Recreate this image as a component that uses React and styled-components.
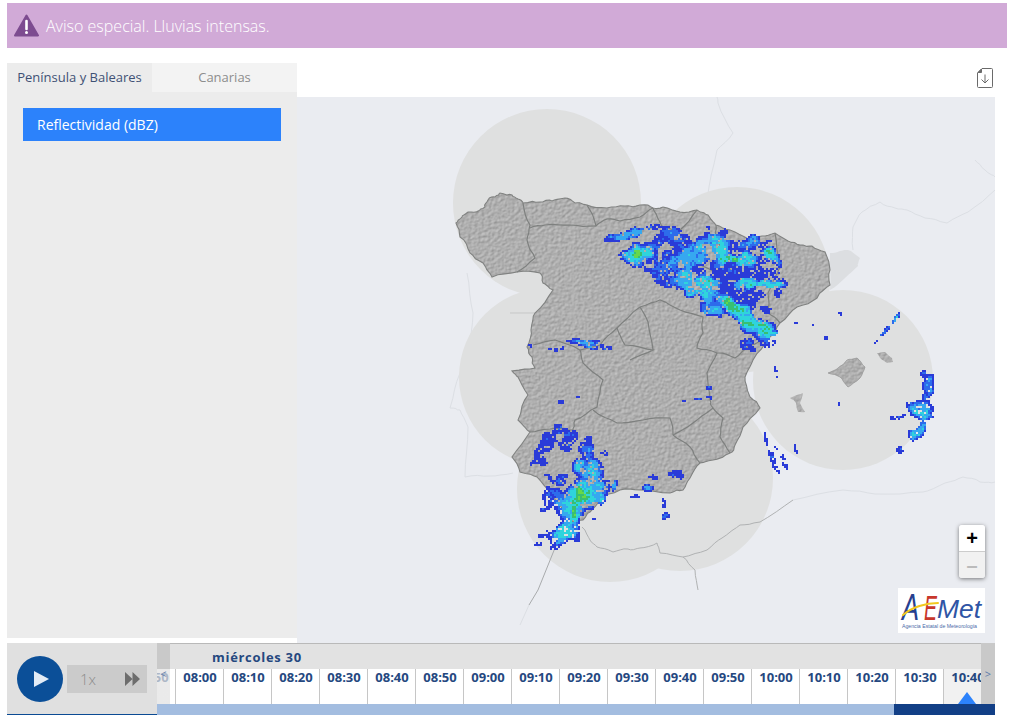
import React from "react";
import styled, { createGlobalStyle } from "styled-components";

const Global = createGlobalStyle`
  html, body { margin: 0; padding: 0; background: #fff; }
  body { font-family: "Open Sans", "Liberation Sans", sans-serif; }
  * { box-sizing: border-box; }
`;

const Page = styled.div`
  width: 1019px;
  height: 715px;
  overflow: hidden;
  padding: 3px 12px 0 7px;
  display: flex;
  flex-direction: column;
`;
const Banner = styled.div`
  height: 45px;
  flex: none;
  background: #d1aad7;
  display: flex;
  align-items: center;
  gap: 7px;
  padding-left: 7px;
  margin-bottom: 15px;
  color: #fff;
  font-size: 16px;
  font-weight: 300;
`;
const Main = styled.div`
  display: flex;
  height: 580px;
  flex: none;
`;
const Side = styled.div`
  width: 290px;
  height: 575px;
  display: flex;
  flex-direction: column;
`;
const Tabs = styled.div`
  display: flex;
  height: 29px;
  flex: none;
`;
const Tab = styled.div`
  flex: 1;
  display: flex;
  align-items: center;
  justify-content: center;
  padding-bottom: 2px;
  font-size: 13px;
  background: ${(p) => (p.$active ? "#ececec" : "#f3f3f3")};
  color: ${(p) => (p.$active ? "#3f5175" : "#8d8d8d")};
`;
const Panel = styled.div`
  flex: 1;
  background: #ececec;
  padding: 16px;
`;
const LayerButton = styled.div`
  width: 258px;
  height: 33px;
  background: #2c82fb;
  color: #fff;
  font-size: 14px;
  display: flex;
  align-items: center;
  padding-left: 14px;
`;
const MapColumn = styled.div`
  width: 698px;
  display: flex;
  flex-direction: column;
`;
const Toolbar = styled.div`
  height: 34px;
  flex: none;
  display: flex;
  justify-content: flex-end;
  align-items: flex-start;
  padding: 5px 2px 0 0;
`;
const MapFrame = styled.div`
  position: relative;
  flex: 1;
  background: #eaecf1;
  overflow: hidden;
`;
const MapSvg = styled.svg`
  display: block;
  width: 100%;
  height: 100%;
`;
const ZoomBox = styled.div`
  position: absolute;
  right: 10px;
  top: 428px;
  width: 26px;
  height: 53px;
  border-radius: 3px;
  box-shadow: 0 1px 4px rgba(0, 0, 0, 0.5);
  overflow: hidden;
  display: flex;
  flex-direction: column;
`;
const ZoomButton = styled.div`
  flex: 1;
  display: flex;
  align-items: center;
  justify-content: center;
  font-family: "Liberation Sans", sans-serif;
  font-weight: 700;
  font-size: 20px;
  background: ${(p) => (p.$off ? "#f1f1f1" : "#fff")};
  color: ${(p) => (p.$off ? "#bbb" : "#000")};
  border-top: ${(p) => (p.$off ? "1px solid #ccc" : "none")};
`;
const Logo = styled.div`
  position: absolute;
  right: 10px;
  top: 491px;
  width: 87px;
  height: 45px;
  background: #fff;
`;
const LogoSvg = styled.svg`
  display: block;
`;
const Bottom = styled.div`
  display: flex;
  height: 72px;
  flex: none;
  width: 988px;
`;
const Controls = styled.div`
  width: 150px;
  flex: none;
  background: #e0e0e0;
  border-bottom: 1px solid #0b4a93;
  display: flex;
  align-items: center;
  gap: 4px;
  padding-left: 10px;
`;
const PlayButton = styled.div`
  width: 46px;
  height: 46px;
  border-radius: 50%;
  background: #0b4f98;
  display: flex;
  align-items: center;
  justify-content: center;
  padding-left: 3px;
`;
const Speed = styled.div`
  width: 80px;
  height: 28px;
  background: #cbcbcb;
  display: flex;
  align-items: center;
  justify-content: space-between;
  padding: 0 7px 0 13px;
  color: #8c8c8c;
  font-size: 15px;
  font-weight: 300;
`;
const Timeline = styled.div`
  position: relative;
  flex: 1;
  min-width: 0;
  display: flex;
  flex-direction: column;
  overflow: hidden;
`;
const DayHeader = styled.div`
  height: 26px;
  flex: none;
  background: #e2e2e2;
  border-top: 1px solid #b9b9b9;
  padding: 4px 0 0 55px;
  color: #25487f;
  font-weight: 700;
  font-size: 13px;
  letter-spacing: 0.7px;
  line-height: 18px;
`;
const Slots = styled.div`
  display: flex;
  height: 35px;
  flex: none;
  margin-left: -29.5px;
  background: #fff;
`;
const Slot = styled.div`
  width: 48px;
  flex: none;
  text-align: center;
  position: relative;
  padding-left: 2px;
  font-size: 13px;
  font-weight: 700;
  line-height: 16px;
  color: #25487f;
  background: ${(p) => (p.$active ? "#f1f1f1" : "#fff")};
  border-right: 1px solid #c6c6c6;
`;
const Marker = styled.div`
  position: absolute;
  left: 50%;
  bottom: 0;
  transform: translateX(-50%);
  width: 0;
  height: 0;
  border-left: 9px solid transparent;
  border-right: 9px solid transparent;
  border-bottom: 12px solid #2c82fb;
`;
const Progress = styled.div`
  display: flex;
  flex: 1;
`;
const ProgressPart = styled.div`
  flex: ${(p) => p.$size};
  background: ${(p) => p.$color};
`;
const ScrollButton = styled.div`
  position: absolute;
  top: 0;
  bottom: 11px;
  ${(p) => (p.$right ? "right: 0; width: 14px;" : "left: 0; width: 13px;")}
  background: ${(p) => (p.$right ? "#c9c9c9" : "linear-gradient(#c9c9c9 26px, rgba(226, 226, 226, 0.72) 26px)")};
  color: #5c7cab;
  font-size: 11px;
  line-height: 12px;
  padding-top: 25px;
  text-align: center;
`;

/* ---------- map data (page coordinates) ---------- */
const hash = (x, y) => {
  const s = Math.sin(x * 127.1 + y * 311.7) * 43758.5453;
  return s - Math.floor(s);
};
const noise = (x, y, c) => {
  const fx = x / c, fy = y / c;
  const ix = Math.floor(fx), iy = Math.floor(fy);
  const tx = fx - ix, ty = fy - iy;
  const a = hash(ix, iy), b = hash(ix + 1, iy), d = hash(ix, iy + 1), e = hash(ix + 1, iy + 1);
  return (a * (1 - tx) + b * tx) * (1 - ty) + (d * (1 - tx) + e * tx) * ty;
};
const rough = (pts, amp, closed) => {
  let cur = pts;
  for (let it = 0; it < 2; it++) {
    const out = [];
    const n = closed ? cur.length : cur.length - 1;
    for (let i = 0; i < n; i++) {
      const a = cur[i], b = cur[(i + 1) % cur.length];
      out.push(a);
      const k = amp / (it + 1);
      out.push([
        (a[0] + b[0]) / 2 + (hash(a[0], b[1] + it) - 0.5) * k,
        (a[1] + b[1]) / 2 + (hash(b[0], a[1] + it) - 0.5) * k,
      ]);
    }
    if (!closed) out.push(cur[cur.length - 1]);
    cur = out;
  }
  return cur;
};
const toPath = (pts, closed) =>
  "M" + pts.map((p) => p[0].toFixed(1) + " " + p[1].toFixed(1)).join("L") + (closed ? "Z" : "");

const spain = [
  [456,223],[462,217],[468,212],[478,211],[485,207],[488,200],[495,197],[500,193],[512,195],[518,199],[523,203],[540,202],[552,201],[565,198],
  [575,203],[587,205],[607,208],[625,206],[640,205],[653,208],[663,207],[680,212],[697,210],[708,215],[716,225],[730,230],[750,240],[762,236],[775,233],
  [788,241],[800,245],[812,246],[825,252],[830,270],[830,285],[817,298],[797,307],[780,323],[767,340],[753,360],[745,377],[750,397],[760,408],
  [743,427],[735,445],[730,453],[713,460],[700,463],[690,478],[683,490],[670,493],[640,490],[620,490],[600,500],[590,512],[583,520],[573,522],[563,510],
  [550,493],[537,477],[520,472],[512,457],[530,432],[518,420],[528,395],[518,377],[512,371],[535,368],[532,357],[527,347],[531,330],[535,313],[553,290],
  [543,283],[540,273],[517,272],[492,277],[483,263],[470,253],[460,237],
];
const mallorca = [[828,373],[838,368],[847,360],[857,358],[865,367],[860,378],[848,387],[840,377]];
const menorca = [[877,353],[885,352],[892,358],[893,362],[887,363],[880,358]];
const ibiza = [[790,398],[803,393],[800,403],[805,412],[798,412],[796,403]];
const catalonia = [[830,253],[840,251],[848,250],[860,258],[858,266],[845,278],[830,290]];

const borders = [
  [[523,203],[530,225],[527,240],[535,258],[517,272]],
  [[530,228],[545,225],[570,225],[596,226],[607,219],[620,221],[640,217],[653,208]],
  [[587,205],[596,226]],
  [[653,208],[660,222],[665,228],[680,230],[697,210]],
  [[665,228],[672,245],[690,262],[715,272],[735,280],[728,262],[716,238],[716,225]],
  [[775,233],[780,267],[768,293],[768,313],[780,323]],
  [[533,345],[555,340],[580,350],[600,345],[617,328],[640,307],[660,300],[680,310],[703,317],[703,333],[697,348],[717,353],[735,358],[750,345],[767,340]],
  [[580,350],[583,363],[603,380],[597,407],[575,420],[573,430],[550,429],[530,432]],
  [[617,328],[625,345],[653,350],[630,360]],
  [[640,307],[648,322],[653,350]],
  [[593,410],[617,423],[643,420],[670,418],[673,435],[690,447],[700,463]],
  [[673,435],[693,423],[713,408],[723,418],[720,437],[730,453]],
  [[717,353],[707,373],[710,400],[713,408]],
];
const faint = [
  [[717,97],[718,103],[733,133],[717,150],[707,200],[697,210]],
  [[853,250],[853,227],[862,212],[880,202],[895,208],[907,210],[925,218],[947,223],[968,212],[995,190]],
  [[975,160],[985,170],[995,177]],
  [[793,500],[843,490],[875,494],[923,492],[945,483],[963,477],[980,482],[995,482]],
  [[468,427],[465,477],[490,476],[513,473]],
  [[473,313],[468,350],[460,373],[450,408],[460,410],[468,427]],
  [[467,273],[473,313]],
];
const africa = [
  [[582,527],[590,540],[597,547],[613,552],[628,549],[640,548],[657,543],[660,553],[683,557],[707,550],[722,538],[740,525],[760,522],[793,500]],
  [[683,557],[695,570],[698,590]],
];

/* cx, cy, rx, ry, angle, peak, warp */
const blobs = [
  [632,233,25,4,-14,1.7,3],[640,253,15,9,-10,2.2,6],[637,253,5,5,0,4.2,2],[662,250,18,12,0,1.2,8],[673,238,18,10,15,1.15,8],[672,272,28,12,22,1.25,8],[682,262,14,9,0,1.9,8],
  [693,254,15,14,0,1.5,8],[697,283,26,12,30,2.1,8],[712,250,18,16,0,2.0,8],[728,258,11,4,0,3.6,3],[743,260,11,9,0,2.3,6],[745,282,10,7,0,2.6,5],[768,284,15,4,-4,2.7,3],
  [720,297,14,12,40,1.25,6],[733,307,17,6,40,3.0,6],[752,323,24,10,35,2.6,7],[765,333,10,6,0,2.6,5],[710,306,12,7,30,1.8,6],[752,242,17,5,0,1.4,5],[770,255,8,6,0,2.3,5],
  [717,229,11,3.5,15,1.3,3],[778,262,3,4,0,1.05,1],[745,343,8,5,0,1.1,4],[752,348,3,3,0,1,1],
  [738,278,42,30,30,0.85,8],
  [530,345,3,2,0,1.2,1],[550,347,12,2,-5,1.1,3],[585,343,18,3,10,1.4,4],[605,347,8,2,0,1,2],
  [560,435,15,9,0,1.1,6],[540,450,9,14,10,0.85,7],[565,447,5,3,0,0.9,2],[587,452,9,12,0,1.15,6],[587,470,14,12,40,2.1,6],[555,477,11,4,0,1,4],[603,453,4,3,0,1.05,1],
  [557,497,14,11,0,1.15,6],[581,497,22,14,-30,2.5,7],[580,495,6,10,-30,3.8,3],[573,515,16,11,-40,2.3,7],[573,512,4,6,0,3.4,2],[563,533,15,10,-40,2.0,6],[595,485,9,5,0,1.9,4],[613,483,3,6,10,2.0,2],[543,508,5,3,0,1,2],
  [543,533,4,5,0,0.85,3],[537,543,3,3,0,0.85,2],[653,477,6,2,0,0.95,2],[673,472,6,3,-15,1.1,2],[647,487,5,4,0,1.4,2],[663,515,5,3,0,1.3,1],[663,503,3,6,0,0.75,2],[632,495,8,2,0,0.75,2],[680,476,4,3,0,0.85,1],
  [685,400,3.5,1.5,0,1.05,0],[696,398,3.5,1.5,0,1,0],[708,397,3,1.5,0,1,0],[708,387,4,1.6,0,1,0],[560,401,3,2,0,1,0],[577,396,2,1.5,0,1,0],
  [920,408,11,10,0,2.0,4],[928,387,5,14,15,1.2,3],[917,428,6,12,25,1.8,3],[897,416,8,2,-10,1.05,1],[899,449,3,3,0,1.2,0],[923,373,3,4,0,1.1,1],
  [886,328,18,1.5,-50,1.2,0],[894,318,7,1.8,-50,1.8,0],[770,452,2.4,21,-18,1.05,1],[797,451,2,9,-32,0.95,0],[783,461,2,8,-18,0.95,0],
  [773,444,1.5,6,-30,0.9,0],[812,325,1.5,2,0,1,0],[839,313,2,2,0,1,0],[825,337,2,2,0,1,0],[795,322,2,2,0,1,0],[775,370,2,8,-15,0.7,1],[839,404,2,3,0,0.7,1],
];
const palette = ["#2a3bd8", "#2d6ceb", "#36a8f0", "#2fd4dc", "#38bf72", "#66d84a"];
const echoes = (() => {
  const paths = palette.map(() => []);
  const sx = Math.min(...blobs.map((b) => b[0])) - 44;
  const ex = Math.max(...blobs.map((b) => b[0])) + 44;
  for (let x = sx - (sx % 2); x < ex; x += 2) {
    for (let y = 198; y < 560; y += 2) {
      const wx = noise(x + 31, y + 17, 8) - 0.5;
      const wy = noise(x + 71, y + 53, 8) - 0.5;
      let f = 0;
      for (let i = 0; i < blobs.length; i++) {
        const b = blobs[i];
        const dx = x + wx * b[6] * 2 - b[0], dy = y + wy * b[6] * 2 - b[1];
        if (Math.abs(dx) > 50 || Math.abs(dy) > 50) continue;
        const a = (b[4] * Math.PI) / 180;
        const u = (dx * Math.cos(a) + dy * Math.sin(a)) / b[2];
        const v = (-dx * Math.sin(a) + dy * Math.cos(a)) / b[3];
        const r2 = u * u + v * v;
        const val = b[5] * Math.exp(-0.6 * r2 * r2);
        if (val > f) f = val;
      }
      if (f < 0.15) continue;
      const coarse = noise(x, y, 7);
      const fine = hash(x, y);
      if (coarse < 0.3 && f < 2.4) continue;
      if (fine < 0.1 && f < 2.2) continue;
      const val = f * (0.45 + 0.8 * coarse + 0.45 * fine);
      if (val < 0.55) continue;
      const lvl = val < 1.25 ? 0 : val < 1.65 ? 1 : val < 2.3 ? 2 : val < 3.2 ? 3 : val < 4.2 ? 4 : 5;
      paths[lvl].push(`M${x} ${y}h2v2h-2z`);
    }
  }
  return paths.map((p) => p.join(""));
})();

const circles = [
  [547, 203, 94], [737, 280, 93], [843, 380, 90], [680, 478, 93], [610, 489, 93], [548, 377, 89],
];
const landPath = toPath(rough(spain, 3, true), true);
const times = ["07:50","08:00","08:10","08:20","08:30","08:40","08:50","09:00","09:10","09:20","09:30","09:40","09:50","10:00","10:10","10:20","10:30","10:40"];

const RadarMap = () => (
  <MapSvg viewBox="297 97 698 546">
    <defs>
      <filter id="relief" x="0" y="0" width="100%" height="100%" colorInterpolationFilters="sRGB">
        <feTurbulence type="fractalNoise" baseFrequency="0.3 0.35" numOctaves="3" seed="7" />
        <feDiffuseLighting surfaceScale="0.55" lightingColor="#fff" diffuseConstant="0.95">
          <feDistantLight azimuth="225" elevation="50" />
        </feDiffuseLighting>
        <feColorMatrix values="0.62 0 0 0 0.235  0.62 0 0 0 0.235  0.62 0 0 0 0.235  0 0 0 1 0" />
      </filter>
      <clipPath id="land">
        <path d={landPath} />
        <path d={toPath(rough(mallorca, 2, true), true)} />
        <path d={toPath(rough(menorca, 1, true), true)} />
        <path d={toPath(rough(ibiza, 1, true), true)} />
      </clipPath>
    </defs>
    {faint.map((l, i) => (
      <path key={i} d={toPath(rough(l, 2.5, false))} fill="none" stroke="#dcdfe4" strokeWidth="1" />
    ))}
    <g fill="#dfe0e0">
      {circles.map((c, i) => (
        <circle key={i} cx={c[0]} cy={c[1]} r={c[2]} />
      ))}
      <path d={toPath(rough(catalonia, 2, true), true)} fill="#dcdee1" />
    </g>
    {africa.map((l, i) => (
      <path key={i} d={toPath(rough(l, 2.5, false))} fill="none" stroke="#b0b2b3" strokeWidth="1" />
    ))}
    <path d="M557 543L538 590L529 605" fill="none" stroke="#a9abad" strokeWidth="1" />
    <path d="M529 605L520 625" fill="none" stroke="#dcdfe4" strokeWidth="1" />
    <g clipPath="url(#land)">
      <rect x="440" y="180" width="470" height="350" fill="#aaa" filter="url(#relief)" />
    </g>
    <path d="M573 220V420M510 313H700" stroke="#bcbcbc" strokeWidth="0.7" fill="none" />
    <path d={landPath} fill="none" stroke="#808281" strokeWidth="1.1" />
    <path d={toPath(rough(mallorca, 2, true), true)} fill="none" stroke="#8a8a8a" strokeWidth="0.6" />
    {borders.map((l, i) => (
      <path key={i} d={toPath(rough(l, 2.5, false))} fill="none" stroke="#7e807f" strokeWidth="1.2" />
    ))}
    {echoes.map((d, i) => (
      <path key={i} d={d} fill={palette[i]} />
    ))}
  </MapSvg>
);

export default function App() {
  return (
    <Page>
      <Global />
      <Banner>
        <svg width="25" height="23" viewBox="0 0 25 23">
          <path d="M12.5 1.5L24 21.5H1Z" fill="#7d4c90" stroke="#7d4c90" strokeWidth="2" strokeLinejoin="round" />
          <path d="M12.5 7v8" stroke="#fff" strokeWidth="2.6" strokeLinecap="round" />
          <circle cx="12.5" cy="18.6" r="1.5" fill="#fff" />
        </svg>
        Aviso especial. Lluvias intensas.
      </Banner>
      <Main>
        <Side>
          <Tabs>
            <Tab $active>Península y Baleares</Tab>
            <Tab>Canarias</Tab>
          </Tabs>
          <Panel>
            <LayerButton>Reflectividad (dBZ)</LayerButton>
          </Panel>
        </Side>
        <MapColumn>
          <Toolbar>
            <svg width="16" height="20" viewBox="0 0 16 20" fill="none" stroke="#6a6a6a" strokeWidth="1">
              <path d="M5 .5H14.5a1 1 0 0 1 1 1V18.5a1 1 0 0 1-1 1H1.5a1 1 0 0 1-1-1V5Z" />
              <path d="M1 4.5L4.5 1V4.5Z" fill="#6a6a6a" />
              <path d="M8 6.5V15M4.5 11.5L8 15l3.500-3.500" />
            </svg>
          </Toolbar>
          <MapFrame>
            <RadarMap />
            <ZoomBox>
              <ZoomButton>+</ZoomButton>
              <ZoomButton $off>–</ZoomButton>
            </ZoomBox>
            <Logo>
              <LogoSvg width="87" height="45" viewBox="0 0 87 45">
                <text x="4" y="32" fontFamily="Liberation Sans" fontStyle="italic" fontSize="37" fill="#27408f" textLength="17" lengthAdjust="spacingAndGlyphs">A</text>
                <text x="26" y="32" fontFamily="Liberation Sans" fontStyle="italic" fontSize="35" fill="#c8372b" textLength="13" lengthAdjust="spacingAndGlyphs">E</text>
                <path d="M5 27C14 19 28 15 40 15" fill="none" stroke="#f2c81e" strokeWidth="2" strokeLinecap="round" />
                <text x="39" y="30" fontFamily="Liberation Sans" fontStyle="italic" fontSize="26" fill="#2f55a5" textLength="44" lengthAdjust="spacingAndGlyphs">Met</text>
                <text x="4" y="40" fontFamily="Liberation Sans" fontSize="6" fill="#4a6aa8" textLength="75" lengthAdjust="spacingAndGlyphs">Agencia Estatal de Meteorología</text>
              </LogoSvg>
            </Logo>
          </MapFrame>
        </MapColumn>
      </Main>
      <Bottom>
        <Controls>
          <PlayButton>
            <svg width="15" height="16" viewBox="0 0 15 16">
              <path d="M0 0L15 8L0 16Z" fill="#e3ecf6" />
            </svg>
          </PlayButton>
          <Speed>
            1x
            <svg width="15" height="14" viewBox="0 0 15 14">
              <path d="M0 0L7.500 7L0 14ZM7.500 0L15 7L7.500 14Z" fill="#6d6d6d" />
            </svg>
          </Speed>
        </Controls>
        <Timeline>
          <DayHeader>miércoles 30</DayHeader>
          <Slots>
            {times.map((t, i) => (
              <Slot key={t} $active={i === times.length - 1}>
                {t}
                {i === times.length - 1 && <Marker />}
              </Slot>
            ))}
          </Slots>
          <Progress>
            <ProgressPart $size={737} $color="#a3bde0" />
            <ProgressPart $size={101} $color="#123f86" />
          </Progress>
          <ScrollButton>&lt;</ScrollButton>
          <ScrollButton $right>&gt;</ScrollButton>
        </Timeline>
      </Bottom>
    </Page>
  );
}
